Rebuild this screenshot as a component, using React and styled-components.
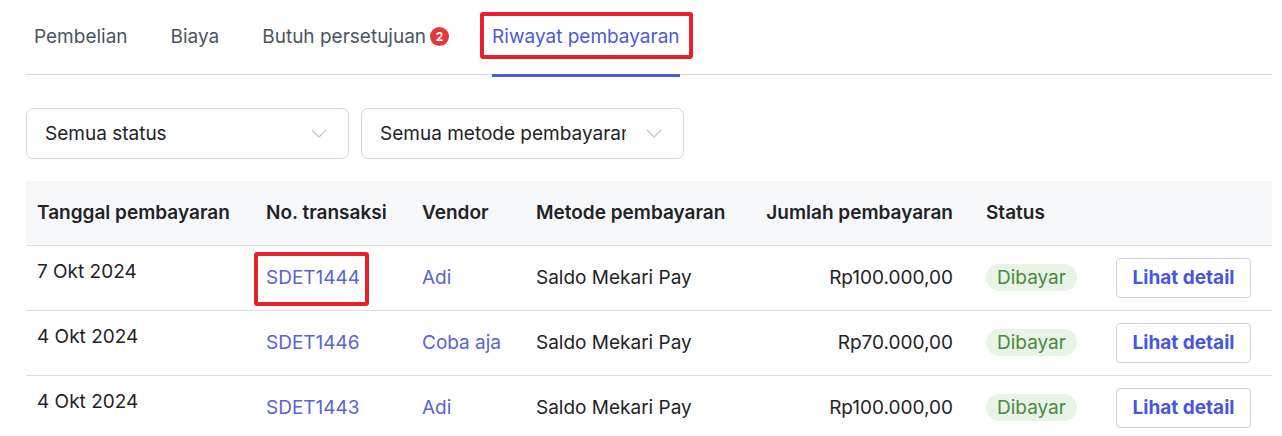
import React from "react";
import styled, { createGlobalStyle } from "styled-components";

const GlobalStyle = createGlobalStyle`
  * { box-sizing: border-box; }
  body {
    margin: 0;
    background: #ffffff;
    font-family: Inter, "Noto Sans", "Liberation Sans", sans-serif;
    color: #1f2328;
  }
`;

const Page = styled.div`
  padding: 0 10px 0 26px;
`;

const TabBar = styled.div`
  display: flex;
  gap: 43px;
  height: 75px;
  padding-left: 8px;
  border-bottom: 1px solid #d5d8de;
`;

const Tab = styled.div`
  position: relative;
  display: flex;
  align-items: center;
  gap: 4px;
  height: 74px;
  padding-bottom: 2px;
  font-size: 19px;
  color: ${(p) => (p.active ? "#4c5bd8" : "#4b5563")};

  ${(p) =>
    p.active &&
    `
    &::after {
      content: "";
      position: absolute;
      left: 0;
      right: 0;
      bottom: -3px;
      height: 3px;
      background: #4a5ddc;
    }
  `}
`;

const Highlight = styled.span`
  position: absolute;
  pointer-events: none;
  border: 4px solid #e8202a;
  border-radius: 3px;
  top: ${(p) => p.top}px;
  bottom: ${(p) => p.bottom}px;
  left: ${(p) => p.left}px;
  right: ${(p) => p.right}px;
`;

const Count = styled.span`
  display: inline-flex;
  align-items: center;
  justify-content: center;
  width: 19px;
  height: 19px;
  border-radius: 50%;
  background: #e5383b;
  color: #fff;
  font-size: 12px;
  font-weight: 700;
`;

const Filters = styled.div`
  display: flex;
  gap: 12px;
  margin-top: 33px;
`;

const Select = styled.div`
  display: flex;
  align-items: center;
  width: 323px;
  height: 51px;
  padding: 0 21px 0 18px;
  border: 1px solid #d5d8de;
  border-radius: 7px;
  font-size: 19px;
  color: #1f2328;
`;

const SelectText = styled.span`
  flex: 1;
  min-width: 0;
  overflow: hidden;
  white-space: nowrap;
`;

const Chevron = styled.svg`
  flex: none;
  width: 16px;
  height: 9px;
  margin-left: 20px;
`;

const Table = styled.div`
  margin-top: 22px;
`;

const Row = styled.div`
  display: grid;
  grid-template-columns: 229px 156px 114px 233px 217px 130px 1fr;
  height: 65px;
  border-bottom: 1px solid #d9dce1;
  background: ${(p) => (p.head ? "#f7f8fa" : "#ffffff")};
  font-size: 19px;
  font-weight: ${(p) => (p.head ? 600 : 400)};
  color: #1f2328;
`;

const Cell = styled.div`
  position: relative;
  display: flex;
  align-items: ${(p) => (p.top ? "flex-start" : "center")};
  justify-content: ${(p) => (p.right ? "flex-end" : "flex-start")};
  padding: ${(p) => (p.top ? "14px" : "0")} ${(p) => (p.right ? "22px" : "0")} 1px 11px;
  white-space: nowrap;
  color: ${(p) => (p.link ? "#5a62d6" : "inherit")};
`;

const Badge = styled.span`
  display: inline-flex;
  align-items: center;
  height: 27px;
  padding: 0 11px;
  border-radius: 14px;
  background: #e7f4e6;
  color: #4a8a3d;
  font-size: 19px;
`;

const DetailButton = styled.button`
  height: 40px;
  width: 135px;
  border: 1px solid #cfd4dc;
  border-radius: 4px;
  background: #fff;
  color: #4656de;
  font-family: inherit;
  font-size: 19px;
  font-weight: 700;
  cursor: pointer;
`;

const tabs = [
  { label: "Pembelian" },
  { label: "Biaya" },
  { label: "Butuh persetujuan", count: 2 },
  { label: "Riwayat pembayaran", active: true },
];

const rows = [
  { date: "7 Okt 2024", no: "SDET1444", vendor: "Adi", amount: "Rp100.000,00", mark: true },
  { date: "4 Okt 2024", no: "SDET1446", vendor: "Coba aja", amount: "Rp70.000,00" },
  { date: "4 Okt 2024", no: "SDET1443", vendor: "Adi", amount: "Rp100.000,00" },
];

const ChevronIcon = () => (
  <Chevron viewBox="0 0 16 9" fill="none">
    <path d="M1 1l7 7 7-7" stroke="#c3c8d0" strokeWidth="1.4" />
  </Chevron>
);

export default function App() {
  return (
    <>
      <GlobalStyle />
      <Page>
        <TabBar>
          {tabs.map((t) => (
            <Tab key={t.label} active={t.active}>
              {t.label}
              {t.count && <Count>{t.count}</Count>}
              {t.active && <Highlight top={12} bottom={15} left={-12} right={-13} />}
            </Tab>
          ))}
        </TabBar>

        <Filters>
          <Select>
            <SelectText>Semua status</SelectText>
            <ChevronIcon />
          </Select>
          <Select>
            <SelectText>Semua metode pembayaran</SelectText>
            <ChevronIcon />
          </Select>
        </Filters>

        <Table>
          <Row head>
            <Cell>Tanggal pembayaran</Cell>
            <Cell>No. transaksi</Cell>
            <Cell>Vendor</Cell>
            <Cell>Metode pembayaran</Cell>
            <Cell right>Jumlah pembayaran</Cell>
            <Cell>Status</Cell>
            <Cell />
          </Row>
          {rows.map((r) => (
            <Row key={r.no}>
              <Cell top>{r.date}</Cell>
              <Cell link>
                {r.no}
                {r.mark && <Highlight top={6} bottom={4} left={-1} right={42} />}
              </Cell>
              <Cell link>{r.vendor}</Cell>
              <Cell>Saldo Mekari Pay</Cell>
              <Cell right>{r.amount}</Cell>
              <Cell>
                <Badge>Dibayar</Badge>
              </Cell>
              <Cell>
                <DetailButton>Lihat detail</DetailButton>
              </Cell>
            </Row>
          ))}
        </Table>
      </Page>
    </>
  );
}
